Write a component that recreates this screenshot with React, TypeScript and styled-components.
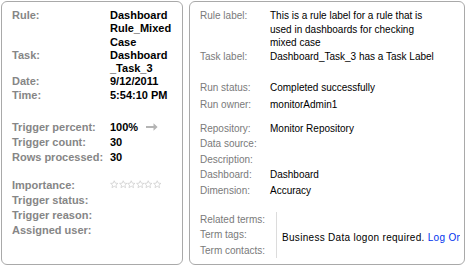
import React from 'react'
import styled, { createGlobalStyle } from 'styled-components'

const GlobalStyle = createGlobalStyle`
    html, body {
        margin: 0;
        padding: 0;
        background: #ffffff;
    }
    body {
        font-family: "Liberation Sans", Arial, sans-serif;
        font-size: 10px;
    }
`

interface Field {
    label: string
    value?: React.ReactNode
}

interface Group {
    fields: Field[]
    pitch: number
    spacing: number
}

const summaryTop: Field[] = [
    { label: 'Rule:', value: 'Dashboard Rule_Mixed Case' },
    { label: 'Task:', value: 'Dashboard _Task_3' },
    { label: 'Date:', value: '9/12/2011' },
    { label: 'Time:', value: '5:54:10 PM' },
]

const summaryBottom: Field[] = [
    { label: 'Trigger status:' },
    { label: 'Trigger reason:' },
    { label: 'Assigned user:' },
]

const detailsGroups: Group[] = [
    {
        pitch: 13.5,
        spacing: 0,
        fields: [
            { label: 'Rule label:', value: 'This is a rule label for a rule that is used in dashboards for checking mixed case' },
            { label: 'Task label:', value: 'Dashboard_Task_3 has a Task Label' },
        ],
    },
    {
        pitch: 16.5,
        spacing: 17,
        fields: [
            { label: 'Run status:', value: 'Completed successfully' },
            { label: 'Run owner:', value: 'monitorAdmin1' },
        ],
    },
    {
        pitch: 15.4,
        spacing: 8,
        fields: [
            { label: 'Repository:', value: 'Monitor Repository' },
            { label: 'Data source:' },
            { label: 'Description:' },
            { label: 'Dashboard:', value: 'Dashboard' },
            { label: 'Dimension:', value: 'Accuracy' },
        ],
    },
]

const Arrow = () => (
    <svg width="12" height="8" viewBox="0 0 12 8">
        <path d="M0 3h7.5V0.3L11.6 4 7.5 7.7V5H0z" fill="#b4b4b4" />
    </svg>
)

const Star = () => (
    <svg width="8.5" height="9" viewBox="0 0 10 10">
        <path
            d="M5 0.6l1.3 2.8 3 .3-2.3 2 .7 3-2.7-1.6-2.7 1.6.7-3-2.3-2 3-.3z"
            fill="none"
            stroke="#c8c8c8"
            strokeWidth="0.8"
            strokeLinejoin="round"
        />
    </svg>
)

const App: React.FC = () => {
    return (
        <>
            <GlobalStyle />
            <Page>
                <SummaryPanel>
                    <SummaryGrid pitch={13.3} spacing={0}>
                        {summaryTop.map(f => (
                            <React.Fragment key={f.label}>
                                <BoldLabel>{f.label}</BoldLabel>
                                <BoldValue>{f.value}</BoldValue>
                            </React.Fragment>
                        ))}
                    </SummaryGrid>
                    <SummaryGrid pitch={15} spacing={17.6}>
                        <BoldLabel>Trigger percent:</BoldLabel>
                        <BoldValue>
                            <Inline>100% <Arrow /></Inline>
                        </BoldValue>
                        <BoldLabel>Trigger count:</BoldLabel>
                        <BoldValue>30</BoldValue>
                        <BoldLabel>Rows processed:</BoldLabel>
                        <BoldValue>30</BoldValue>
                    </SummaryGrid>
                    <SummaryGrid pitch={15} spacing={12}>
                        <TallLabel>Importance:</TallLabel>
                        <Stars>
                            {[0, 1, 2, 3, 4, 5].map(i => <Star key={i} />)}
                        </Stars>
                        {summaryBottom.map(f => (
                            <React.Fragment key={f.label}>
                                <BoldLabel>{f.label}</BoldLabel>
                                <BoldValue>{f.value}</BoldValue>
                            </React.Fragment>
                        ))}
                    </SummaryGrid>
                </SummaryPanel>
                <DetailsPanel>
                    {detailsGroups.map((group, gi) => (
                        <DetailsGrid key={gi} pitch={group.pitch} spacing={group.spacing}>
                            {group.fields.map(f => (
                                <React.Fragment key={f.label}>
                                    <Label>{f.label}</Label>
                                    <Value>{f.value}</Value>
                                </React.Fragment>
                            ))}
                        </DetailsGrid>
                    ))}
                    <TermsRow>
                        <TermLabels>
                            <Label>Related terms:</Label>
                            <Label>Term tags:</Label>
                            <Label>Term contacts:</Label>
                        </TermLabels>
                        <TermsMessage>
                            Business Data logon required. <Link>Log On</Link>
                        </TermsMessage>
                    </TermsRow>
                </DetailsPanel>
            </Page>
        </>
    )
}

const Page = styled.div`
    display: flex;
    gap: 6px;
    padding: 1px;
    width: 466px;
    box-sizing: border-box;
`

const Panel = styled.div`
    border: 1px solid #a9a9a9;
    border-radius: 6px;
    box-sizing: border-box;
    height: 264px;
    overflow: hidden;
    display: flex;
    flex-direction: column;
`

const SummaryPanel = styled(Panel)`
    width: 182px;
    padding: 7px 0 0 10px;
`

const DetailsPanel = styled(Panel)`
    width: 276px;
    padding: 7px 4px 0 10px;
`

const SummaryGrid = styled.div<{ pitch: number; spacing: number }>`
    display: grid;
    grid-template-columns: 98px 70px;
    line-height: ${props => props.pitch}px;
    margin-top: ${props => props.spacing}px;
`

const DetailsGrid = styled.div<{ pitch: number; spacing: number }>`
    display: grid;
    grid-template-columns: 70px 170px;
    line-height: ${props => props.pitch}px;
    margin-top: ${props => props.spacing}px;
`

const BoldLabel = styled.div`
    font-weight: bold;
    font-size: 11px;
    color: #868686;
    white-space: nowrap;
`

const TallLabel = styled(BoldLabel)`
    line-height: 16.5px;
`

const BoldValue = styled.div`
    font-weight: bold;
    font-size: 11px;
    color: #000000;
    line-height: 13.3px;
    align-self: center;
`

const Inline = styled.span`
    display: inline-flex;
    align-items: center;
    gap: 8px;
`

const Stars = styled.div`
    display: flex;
    align-items: center;
`

const Label = styled.div`
    color: #7a7a7a;
    white-space: nowrap;
`

const Value = styled.div`
    color: #000000;
`

const TermsRow = styled.div`
    display: flex;
    align-items: center;
    margin-top: 13.5px;
    min-width: 0;
`

const TermLabels = styled.div`
    flex: none;
    width: 76px;
    line-height: 15.5px;
    border-right: 1px solid #dcdcdc;
`

const TermsMessage = styled.div`
    flex: 1;
    min-width: 0;
    overflow: hidden;
    padding-left: 5px;
    padding-top: 6px;
    white-space: nowrap;
    letter-spacing: 0.3px;
    color: #000000;
`

const Link = styled.span`
    color: #0033ee;
`

export default App
